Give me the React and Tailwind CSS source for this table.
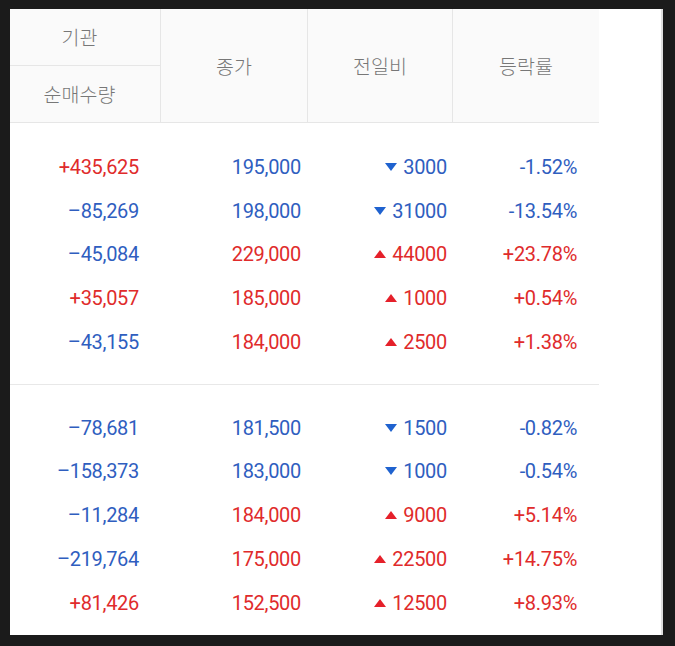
import React from "react";

const RED = "text-[#e02b2b]";
const BLUE = "text-[#2f5ebf]";

const groups = [
  [
    ["+435,625", "195,000", "down", "3000", "-1.52%"],
    ["–85,269", "198,000", "down", "31000", "-13.54%"],
    ["–45,084", "229,000", "up", "44000", "+23.78%"],
    ["+35,057", "185,000", "up", "1000", "+0.54%"],
    ["–43,155", "184,000", "up", "2500", "+1.38%"],
  ],
  [
    ["–78,681", "181,500", "down", "1500", "-0.82%"],
    ["–158,373", "183,000", "down", "1000", "-0.54%"],
    ["–11,284", "184,000", "up", "9000", "+5.14%"],
    ["–219,764", "175,000", "up", "22500", "+14.75%"],
    ["+81,426", "152,500", "up", "12500", "+8.93%"],
  ],
];

function Arrow({ dir }) {
  return (
    <svg width="12" height="8" viewBox="0 0 12 8" className="mr-[6px] shrink-0">
      {dir === "up" ? (
        <polygon points="6,0 12,8 0,8" fill="#e5202a" />
      ) : (
        <polygon points="0,0 12,0 6,8" fill="#1f62cf" />
      )}
    </svg>
  );
}

export default function App() {
  return (
    <div className="w-[675px] h-[646px] bg-[#1b1b1b] pt-[9px] pl-[10px] pr-[12px] pb-[11px] flex">
      <div className="flex-1 bg-white border-r-2 border-[#dedede] overflow-hidden">
        <div className="w-[589px]">
          {/* header */}
          <div
            className="grid grid-cols-[151px_147px_145px_146px] bg-[#fafafa] border-b border-[#e6e6e6] text-[#777] text-[19.5px] font-light"
            style={{ fontFamily: '"Noto Sans CJK KR", "Noto Sans", sans-serif' }}
          >
            <div className="border-r border-[#e6e6e6] flex flex-col">
              <div className="h-[57px] flex items-center justify-center border-b border-[#e6e6e6] pr-[11px]">
                기관
              </div>
              <div className="h-[56px] flex items-center justify-center pr-[11px]">순매수량</div>
            </div>
            <div className="border-r border-[#e6e6e6] flex items-center justify-center">종가</div>
            <div className="border-r border-[#e6e6e6] flex items-center justify-center">전일비</div>
            <div className="flex items-center justify-center">등락률</div>
          </div>

          {/* body */}
          {groups.map((rows, gi) => (
            <div
              key={gi}
              className={gi === 0 ? "pt-[22px] pb-[20px] border-b border-[#e8e8e8]" : "pt-[21px] pb-[20px]"}
              style={{ fontFamily: "Roboto, sans-serif" }}
            >
              {rows.map((r, i) => {
                const isUp = r[2] === "up";
                const c = isUp ? RED : BLUE;
                return (
                  <div
                    key={i}
                    className="grid grid-cols-[151px_147px_145px_146px] h-[43.75px] items-center text-[20px] tracking-[-0.3px]"
                  >
                    <div className={`text-right pr-[22px] ${r[0].startsWith("+") ? RED : BLUE}`}>{r[0]}</div>
                    <div className={`text-right pr-[7px] ${c}`}>{r[1]}</div>
                    <div className={`flex items-center justify-end pr-[6px] ${c}`}>
                      <Arrow dir={r[2]} />
                      {r[3]}
                    </div>
                    <div className={`text-right pr-[22px] ${c}`}>{r[4]}</div>
                  </div>
                );
              })}
            </div>
          ))}
        </div>
      </div>
    </div>
  );
}
